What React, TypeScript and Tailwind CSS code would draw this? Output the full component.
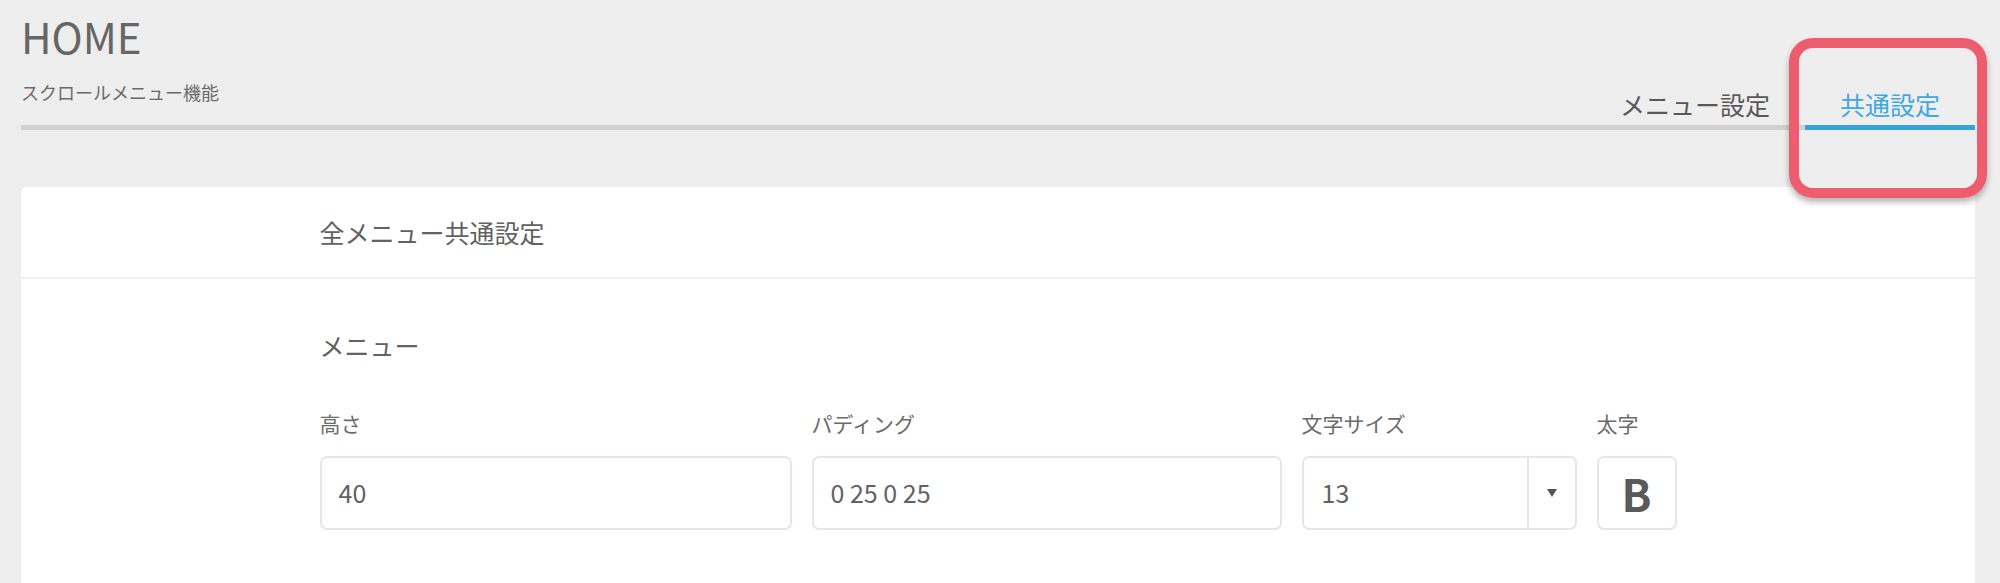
import { useState } from "react";

const font = {
  fontFamily: '"Noto Sans CJK JP", "Noto Sans", sans-serif',
};

const Field = ({ label, value, width }: { label: string; value: string; width: string }) => (
  <div className={`flex flex-col ${width}`}>
    <div className="text-[21px] leading-[28px] text-[#6b6b6b]">{label}</div>
    <div className="mt-[19px] flex h-[74px] items-center rounded-[7px] border-2 border-[#e3e6ec] bg-white pl-[17px] text-[25px] text-[#606266]">
      {value}
    </div>
  </div>
);

export default function App() {
  const [tab, setTab] = useState("common");
  const [bold, setBold] = useState(false);

  return (
    <div className="relative min-h-screen bg-[#eeeeee] pl-[21px] pr-[25px] pt-[12px]" style={font}>
      {/* page header */}
      <div className="flex items-end justify-between border-b-[5px] border-[#d0d0d0]">
        <div className="pb-[21px]">
          <div className="text-[42px] leading-[48px] text-[#666666]">HOME</div>
          <div className="mt-[20px] text-[18px] leading-[24px] text-[#6a6a6a]">スクロールメニュー機能</div>
        </div>
        <div className="flex">
          <button
            onClick={() => setTab("menu")}
            className={`-mb-[5px] border-b-[5px] px-[35px] pb-[5px] text-[25px] leading-[32px] ${
              tab === "menu" ? "border-[#35a4dc] text-[#3ea8e0]" : "border-transparent text-[#585858]"
            }`}
          >
            メニュー設定
          </button>
          <button
            onClick={() => setTab("common")}
            className={`-mb-[5px] border-b-[5px] px-[35px] pb-[5px] text-[25px] leading-[32px] ${
              tab === "common" ? "border-[#35a4dc] text-[#3ea8e0]" : "border-transparent text-[#585858]"
            }`}
          >
            共通設定
          </button>
        </div>
      </div>

      {/* settings card */}
      <div className="mt-[57px] rounded-[6px] bg-white">
        <div className="flex h-[92px] items-center border-b-2 border-[#efefef]">
          <div className="mx-auto w-[1357px] text-[25px] leading-[32px] text-[#626262]">全メニュー共通設定</div>
        </div>
        <div className="mx-auto w-[1357px] pb-[80px] pt-[50px]">
          <div className="text-[25px] leading-[32px] text-[#626262]">メニュー</div>
          <div className="mt-[48px] flex gap-[20px]">
            <Field label="高さ" value="40" width="w-[472px]" />
            <Field label="パディング" value="0 25 0 25" width="w-[470px]" />
            <div className="flex w-[275px] flex-col">
              <div className="text-[21px] leading-[28px] text-[#6b6b6b]">文字サイズ</div>
              <div className="mt-[19px] flex h-[74px] items-stretch rounded-[7px] border-2 border-[#e3e6ec] bg-white">
                <div className="flex flex-1 items-center pl-[18px] text-[25px] text-[#606266]">13</div>
                <div className="flex w-[48px] items-center justify-center border-l-2 border-[#e3e6ec]">
                  <svg width="10" height="8" viewBox="0 0 10 8">
                    <path d="M0 0 H10 L5 8 Z" fill="#555555" />
                  </svg>
                </div>
              </div>
            </div>
            <div className="flex w-[80px] flex-col">
              <div className="text-[21px] leading-[28px] text-[#6b6b6b]">太字</div>
              <button
                onClick={() => setBold(!bold)}
                className={`mt-[19px] flex h-[74px] items-center justify-center rounded-[7px] border-2 border-[#e3e6ec] text-[44px] font-bold leading-none text-[#5a5a5a] ${
                  bold ? "bg-[#f2f2f2]" : "bg-white"
                }`}
              >
                B
              </button>
            </div>
          </div>
        </div>
      </div>

      {/* highlight annotation */}
      <div className="pointer-events-none absolute right-[13px] top-[38px] h-[160px] w-[198px] rounded-[24px] border-[10px] border-[#ee5d6f] shadow-[0_4px_6px_rgba(0,0,0,0.3)]" />
    </div>
  );
}
